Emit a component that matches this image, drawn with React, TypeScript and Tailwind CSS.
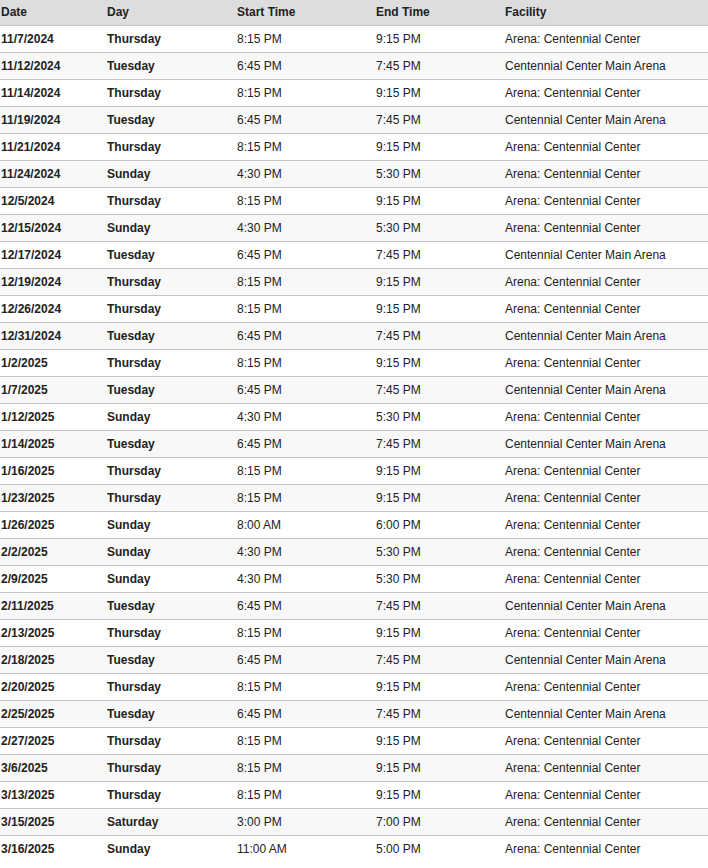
const rows: [string, string, string, string, string][] = [
  ["11/7/2024", "Thursday", "8:15 PM", "9:15 PM", "Arena: Centennial Center"],
  ["11/12/2024", "Tuesday", "6:45 PM", "7:45 PM", "Centennial Center Main Arena"],
  ["11/14/2024", "Thursday", "8:15 PM", "9:15 PM", "Arena: Centennial Center"],
  ["11/19/2024", "Tuesday", "6:45 PM", "7:45 PM", "Centennial Center Main Arena"],
  ["11/21/2024", "Thursday", "8:15 PM", "9:15 PM", "Arena: Centennial Center"],
  ["11/24/2024", "Sunday", "4:30 PM", "5:30 PM", "Arena: Centennial Center"],
  ["12/5/2024", "Thursday", "8:15 PM", "9:15 PM", "Arena: Centennial Center"],
  ["12/15/2024", "Sunday", "4:30 PM", "5:30 PM", "Arena: Centennial Center"],
  ["12/17/2024", "Tuesday", "6:45 PM", "7:45 PM", "Centennial Center Main Arena"],
  ["12/19/2024", "Thursday", "8:15 PM", "9:15 PM", "Arena: Centennial Center"],
  ["12/26/2024", "Thursday", "8:15 PM", "9:15 PM", "Arena: Centennial Center"],
  ["12/31/2024", "Tuesday", "6:45 PM", "7:45 PM", "Centennial Center Main Arena"],
  ["1/2/2025", "Thursday", "8:15 PM", "9:15 PM", "Arena: Centennial Center"],
  ["1/7/2025", "Tuesday", "6:45 PM", "7:45 PM", "Centennial Center Main Arena"],
  ["1/12/2025", "Sunday", "4:30 PM", "5:30 PM", "Arena: Centennial Center"],
  ["1/14/2025", "Tuesday", "6:45 PM", "7:45 PM", "Centennial Center Main Arena"],
  ["1/16/2025", "Thursday", "8:15 PM", "9:15 PM", "Arena: Centennial Center"],
  ["1/23/2025", "Thursday", "8:15 PM", "9:15 PM", "Arena: Centennial Center"],
  ["1/26/2025", "Sunday", "8:00 AM", "6:00 PM", "Arena: Centennial Center"],
  ["2/2/2025", "Sunday", "4:30 PM", "5:30 PM", "Arena: Centennial Center"],
  ["2/9/2025", "Sunday", "4:30 PM", "5:30 PM", "Arena: Centennial Center"],
  ["2/11/2025", "Tuesday", "6:45 PM", "7:45 PM", "Centennial Center Main Arena"],
  ["2/13/2025", "Thursday", "8:15 PM", "9:15 PM", "Arena: Centennial Center"],
  ["2/18/2025", "Tuesday", "6:45 PM", "7:45 PM", "Centennial Center Main Arena"],
  ["2/20/2025", "Thursday", "8:15 PM", "9:15 PM", "Arena: Centennial Center"],
  ["2/25/2025", "Tuesday", "6:45 PM", "7:45 PM", "Centennial Center Main Arena"],
  ["2/27/2025", "Thursday", "8:15 PM", "9:15 PM", "Arena: Centennial Center"],
  ["3/6/2025", "Thursday", "8:15 PM", "9:15 PM", "Arena: Centennial Center"],
  ["3/13/2025", "Thursday", "8:15 PM", "9:15 PM", "Arena: Centennial Center"],
  ["3/15/2025", "Saturday", "3:00 PM", "7:00 PM", "Arena: Centennial Center"],
  ["3/16/2025", "Sunday", "11:00 AM", "5:00 PM", "Arena: Centennial Center"],
];

const cols = "grid grid-cols-[106px_130px_139px_129px_1fr]";

export default function App() {
  return (
    <div className="w-[708px] bg-white font-['Liberation_Sans',Arial,sans-serif] text-[12px] text-[#222]">
      <div className={`${cols} h-[26px] items-center border-b border-[#c4c4c4] bg-[#dddddd] pb-[2px] pl-[1px] font-bold`}>
        <div>Date</div>
        <div>Day</div>
        <div>Start Time</div>
        <div>End Time</div>
        <div>Facility</div>
      </div>
      {rows.map((r, i) => (
        <div
          key={r[0]}
          className={`${cols} h-[27px] items-center border-b pl-[1px] ${
            i < rows.length - 1 ? "border-[#c4c4c4]" : "border-transparent"
          } ${i % 2 === 1 ? "bg-[#f8f8f8]" : "bg-white"}`}
        >
          <div className="font-bold">{r[0]}</div>
          <div className="font-bold">{r[1]}</div>
          <div>{r[2]}</div>
          <div>{r[3]}</div>
          <div>{r[4]}</div>
        </div>
      ))}
    </div>
  );
}
